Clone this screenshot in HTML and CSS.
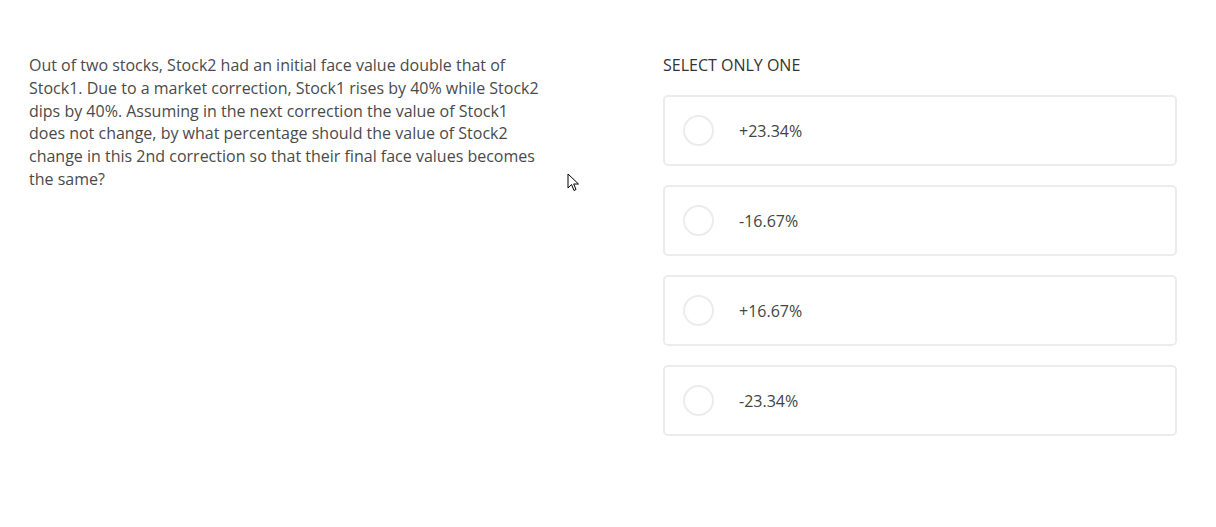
FILE: index.html
```html
<!DOCTYPE html>
<html>
<head>
<meta charset="utf-8">
<link rel="stylesheet" href="styles.css">
</head>
<body>
<div class="page">
  <div class="question">
    <p>Out of two stocks, Stock2 had an initial face value double that of Stock1. Due to a market correction, Stock1 rises by 40% while Stock2 dips by 40%. Assuming in the next correction the value of Stock1 does not change, by what percentage should the value of Stock2 change in this 2nd correction so that their final face values becomes the same?</p>
  </div>
  <div class="answers">
    <div class="label">SELECT ONLY ONE</div>
    <div class="options">
      <div class="option"><span class="radio"></span><span class="text">+23.34%</span></div>
      <div class="option"><span class="radio"></span><span class="text">-16.67%</span></div>
      <div class="option"><span class="radio"></span><span class="text">+16.67%</span></div>
      <div class="option"><span class="radio"></span><span class="text">-23.34%</span></div>
    </div>
  </div>
</div>
<svg class="cursor" width="14" height="20" viewBox="0 0 14 20"><path d="M1 1 L1 15 L4.5 11.5 L7 17.5 L9 16.5 L6.7 11 L11.5 11 Z" fill="#fff" stroke="#000" stroke-width="1" stroke-linejoin="miter"/></svg>
</body>
</html>
```
FILE: styles.css
```css
html, body {
  margin: 0;
  padding: 0;
  background: #fff;
}
body {
  font-family: "Open Sans", "Liberation Sans", sans-serif;
  color: #4a4a4a;
  position: relative;
  min-height: 527px;
}
.page {
  display: grid;
  grid-template-columns: 634px 514px;
  padding: 54px 0 0 29px;
}
.question p {
  margin: 0;
  max-width: 515px;
  font-size: 16px;
  line-height: 22.8px;
  color: #4a4a4a;
}
.label {
  font-size: 16px;
  line-height: 23px;
  color: #333;
  margin-bottom: 18px;
}
.options {
  display: flex;
  flex-direction: column;
  gap: 19px;
}
.option {
  height: 71px;
  box-sizing: border-box;
  border: 2px solid #ececec;
  border-radius: 5px;
  display: flex;
  align-items: center;
  padding-left: 18px;
}
.radio {
  width: 31px;
  height: 31px;
  box-sizing: border-box;
  border: 2px solid #ececec;
  border-radius: 50%;
  margin-right: 25px;
  flex: none;
}
.text {
  font-size: 16px;
  color: #444;
}
.cursor {
  position: absolute;
  left: 567px;
  top: 173px;
}
```
